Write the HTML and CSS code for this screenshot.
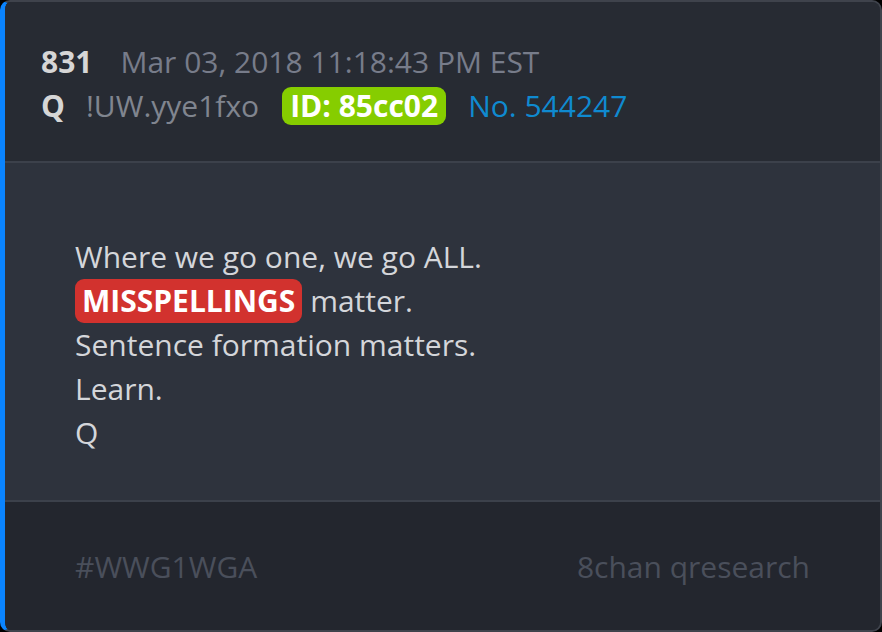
FILE: index.html
```html
<!DOCTYPE html>
<html>
<head>
<meta charset="utf-8">
<link rel="stylesheet" href="styles.css">
</head>
<body>
<div class="card">
  <div class="head">
    <div class="row">
      <span class="num">831</span>
      <span class="date">Mar 03, 2018 11:18:43 PM EST</span>
    </div>
    <div class="row">
      <span class="name">Q</span>
      <span class="trip">!UW.yye1fxo</span>
      <span class="id">ID: 85cc02</span>
      <span class="no">No. 544247</span>
    </div>
  </div>
  <div class="body">
    <p class="line">Where we go one, we go ALL.</p>
    <p class="line"><span class="hl">MISSPELLINGS</span> matter.</p>
    <p class="line">Sentence formation matters.</p>
    <p class="line">Learn.</p>
    <p class="line">Q</p>
  </div>
  <div class="foot">
    <span>#WWG1WGA</span>
    <span>8chan qresearch</span>
  </div>
</div>
</body>
</html>
```
FILE: styles.css
```css
html, body {
  margin: 0;
  padding: 0;
  background: #000;
}
body {
  font-family: "Open Sans", "Liberation Sans", sans-serif;
  font-size: 30px;
  line-height: 44px;
}
.card {
  box-sizing: border-box;
  width: 882px;
  height: 632px;
  border: 2px solid #3f434c;
  border-left: 5px solid #0a84ff;
  border-radius: 10px;
  background: #2e333d;
  overflow: hidden;
  display: flex;
  flex-direction: column;
}
.head {
  background: #272b33;
  padding: 38px 36px 33px 36px;
  border-bottom: 2px solid #3c414b;
}
.row {
  display: flex;
  align-items: center;
  white-space: nowrap;
}
.num {
  font-weight: 700;
  color: #d6d6d6;
  margin-right: 28px;
}
.date {
  color: #777c8a;
}
.name {
  font-weight: 700;
  color: #d6d6d6;
  margin-right: 21px;
}
.trip {
  color: #80858f;
  margin-right: 23px;
}
.id {
  background: #86cd00;
  color: #fff;
  font-weight: 700;
  border-radius: 9px;
  padding: 0 8px;
  line-height: 38px;
  margin-right: 22px;
}
.no {
  color: #0f8ad0;
}
.body {
  flex: 1;
  padding: 72px 70px 0 70px;
  color: #d4d6da;
}
.line {
  margin: 0;
}
.hl {
  background: #d2322e;
  color: #fff;
  font-weight: 700;
  border-radius: 9px;
  padding: 1px 7px 2px;
}
.foot {
  background: #23262e;
  border-top: 2px solid #3c414b;
  height: 130px;
  box-sizing: border-box;
  padding: 43px 70px 0 70px;
  display: flex;
  justify-content: space-between;
  color: #4a4f5b;
}
```
